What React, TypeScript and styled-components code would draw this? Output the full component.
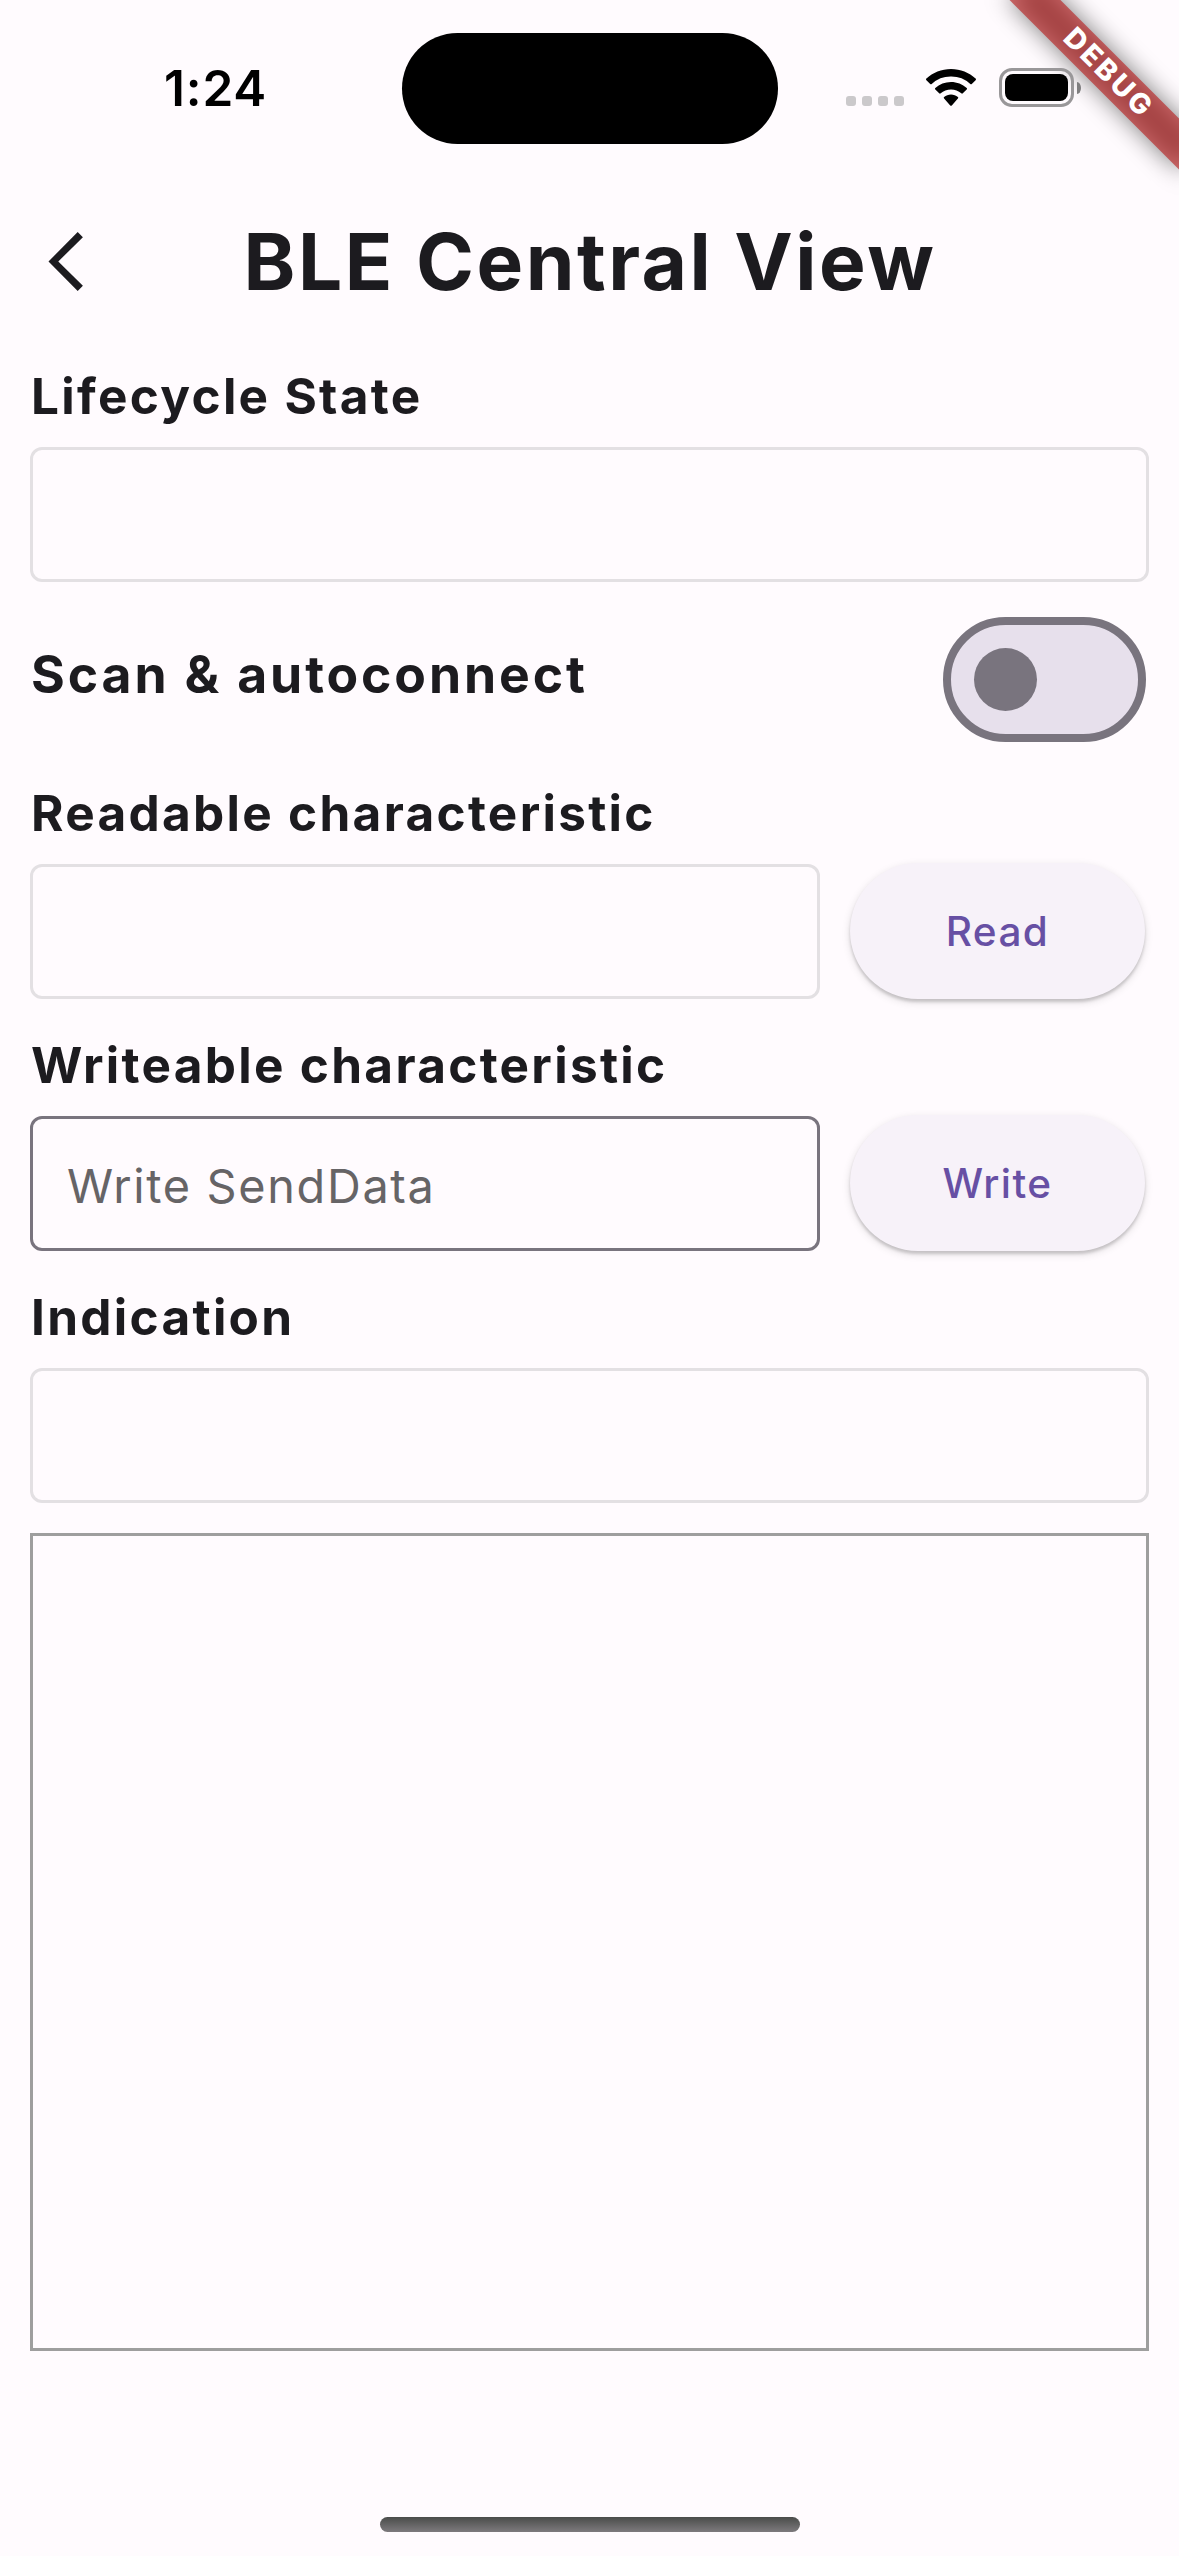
import React from "react";
import styled, { createGlobalStyle } from "styled-components";

const color = {
  surface: "#fffbfe",
  onSurface: "#1c1b1f",
  outline: "#79747e",
  track: "#e7e0ec",
  primary: "#6750a4",
  disabled: "#e3e0e3",
  hint: "#666466",
  grey: "#9e9e9e",
};

const GlobalStyle = createGlobalStyle`
  *, *::before, *::after { box-sizing: border-box; }
  html, body { margin: 0; padding: 0; background: ${color.surface}; }
`;

const Screen = styled.div`
  position: relative;
  display: flex;
  flex-direction: column;
  width: 1179px;
  height: 2556px;
  overflow: hidden;
  background: ${color.surface};
  color: ${color.onSurface};
  font-family: Inter, "Liberation Sans", sans-serif;
`;

const StatusBar = styled.div`
  position: relative;
  z-index: 2;
  flex: none;
  display: grid;
  grid-template-columns: 1fr 376px 1fr;
  height: 177px;
`;

const Clock = styled.div`
  padding: 58px 0 0 164px;
  color: #000;
  font-size: 49.5px;
  font-weight: 600;
  line-height: 60px;
  letter-spacing: 0.84px;
`;

const Island = styled.div`
  height: 111px;
  margin-top: 33px;
  border-radius: 56px;
  background: #000;
`;

const StatusIcons = styled.div`
  display: flex;
  align-items: flex-start;
  padding: 68px 0 0 68px;
`;

const CellDots = styled.div`
  display: flex;
  gap: 6px;
  margin-top: 28px;
`;

const CellDot = styled.span`
  width: 10px;
  height: 10px;
  border-radius: 3px;
  background: #cbc9cb;
`;

const WifiGlyph = styled.svg`
  width: 50px;
  height: 38px;
  margin: 1px 23px 0 22px;
`;

const Battery = styled.div`
  display: flex;
  align-items: center;
  gap: 3px;
`;

const BatteryShell = styled.div`
  width: 75px;
  height: 39px;
  padding: 3px;
  border: 3px solid #999799;
  border-radius: 13px;
`;

const BatteryLevel = styled.div`
  height: 100%;
  border-radius: 8px;
  background: #000;
`;

const BatteryTip = styled.div`
  width: 4px;
  height: 12px;
  border-radius: 0 4px 4px 0 / 0 6px 6px 0;
  background: #7f7e7f;
`;

const BannerAnchor = styled.div`
  position: absolute;
  z-index: 1;
  top: 72px;
  left: 1107px;
  width: 0;
  height: 0;
  transform: rotate(45deg);
`;

const BannerShadow = styled.div`
  position: absolute;
  top: -18px;
  left: -120px;
  width: 240px;
  height: 36px;
  background: rgba(0, 0, 0, 0.5);
  filter: blur(12px);
`;

const BannerStrip = styled.div`
  position: absolute;
  top: -18px;
  left: -120px;
  display: flex;
  align-items: center;
  justify-content: center;
  width: 240px;
  height: 36px;
  padding: 0 0 3px 4px;
  background: rgba(183, 28, 28, 0.627);
  color: #fff;
  font-size: 28.5px;
  font-weight: 850;
  line-height: 33px;
  letter-spacing: 3px;
`;

const AppBar = styled.header`
  flex: none;
  display: grid;
  grid-template-columns: 168px 1fr 168px;
  align-items: center;
  height: 168px;
`;

const BackButton = styled.button`
  display: flex;
  align-items: center;
  height: 168px;
  padding: 0 0 0 48px;
  border: 0;
  background: none;
`;

const Title = styled.h1`
  margin: 2px 0 0 1px;
  font-size: 78.4px;
  font-weight: 680;
  line-height: 96px;
  letter-spacing: 2.5px;
  text-align: center;
  white-space: nowrap;
`;

const Body = styled.main`
  flex: 1;
  display: flex;
  flex-direction: column;
  padding: 21px 30px 0;
`;

const Section = styled.section<{ $after: number }>`
  display: flex;
  flex-direction: column;
  gap: 21px;
  margin-bottom: ${(p) => p.$after}px;
`;

const Label = styled.div`
  padding-left: 1px;
  font-size: 49.5px;
  font-weight: 680;
  line-height: 60px;
  letter-spacing: 2.3px;
  white-space: nowrap;
`;

const SwitchLabel = styled(Label)`
  padding-bottom: 12px;
  font-size: 51.7px;
  letter-spacing: 2.87px;
`;

const FieldRow = styled.div`
  display: flex;
  align-items: flex-end;
  gap: 30px;
  height: 135px;
`;

const Field = styled.input<{ $enabled?: boolean }>`
  flex: 1;
  min-width: 0;
  height: 135px;
  padding: 4px 34px 0;
  border: 3px solid ${(p) => (p.$enabled ? color.outline : color.disabled)};
  border-radius: 12px;
  outline: none;
  background: transparent;
  color: ${color.onSurface};
  font: 420 46.8px Inter, "Liberation Sans", sans-serif;
  letter-spacing: 1.68px;

  &::placeholder {
    color: ${color.hint};
    opacity: 1;
  }
`;

const PillButton = styled.button`
  flex: none;
  width: 295px;
  height: 136px;
  margin-right: 4px;
  padding: 1px 0 0;
  border: 0;
  border-radius: 68px;
  background: #f7f2f9;
  box-shadow: 0 3px 3px rgba(0, 0, 0, 0.15), 0 3px 8px rgba(0, 0, 0, 0.13);
  color: ${color.primary};
  font: 500 40.5px Inter, "Liberation Sans", sans-serif;
  letter-spacing: 1.45px;
`;

const SwitchRow = styled.div`
  display: flex;
  align-items: center;
  justify-content: space-between;
  height: 201px;
  padding: 0 3px 6px 0;
`;

const SwitchTrack = styled.div`
  display: flex;
  align-items: center;
  width: 203px;
  height: 125px;
  padding-left: 23px;
  border: 8px solid ${color.outline};
  border-radius: 63px;
  background: ${color.track};
`;

const SwitchThumb = styled.div`
  width: 63px;
  height: 63px;
  border-radius: 50%;
  background: ${color.outline};
`;

const LogPanel = styled.div`
  height: 818px;
  border: 3px solid ${color.grey};
`;

const HomeArea = styled.footer`
  flex: none;
  display: flex;
  justify-content: center;
  height: 39px;
`;

const HomeIndicator = styled.div`
  width: 420px;
  height: 15px;
  margin-left: 1px;
  border-radius: 8px;
  background: linear-gradient(#4a4c4a, #7d7a7d);
`;

function WifiIcon() {
  return (
    <WifiGlyph viewBox="0 0 50 38">
      <path d="M25 0C34.5 0 43.2 3.6 49.6 9.6a1.1 1.1 0 0 1 0 1.6l-3.8 3.8a1.1 1.1 0 0 1-1.5 0A28 28 0 0 0 25 7.6 28 28 0 0 0 5.700 15a1.100 1.100 0 0 1-1.500 0L.4 11.200a1.100 1.100 0 0 1 0-1.600C6.800 3.600 15.500 0 25 0Z" />
      <path d="M25 12.900c6 0 11.500 2.300 15.700 6a1.100 1.100 0 0 1 0 1.600l-3.900 3.800a1.100 1.100 0 0 1-1.500 0A15.600 15.600 0 0 0 25 20.500c-4 0-7.500 1.400-10.300 3.800a1.100 1.100 0 0 1-1.500 0l-3.900-3.800a1.100 1.100 0 0 1 0-1.600c4.200-3.700 9.700-6 15.700-6Z" />
      <path d="M25 25.500c2.600 0 5 .9 6.900 2.500a1.100 1.100 0 0 1 0 1.600l-6.100 6.800a1.100 1.100 0 0 1-1.600 0l-6.100-6.800a1.100 1.100 0 0 1 0-1.600c1.900-1.600 4.300-2.500 6.900-2.500Z" />
    </WifiGlyph>
  );
}

function BackIcon() {
  return (
    <svg width="35" height="59" viewBox="0 0 35 59">
      <path d="M29.700 0 34.900 5.200 10.300 29.500 34.900 53.800 29.700 59 .5 29.500Z" fill={color.onSurface} />
    </svg>
  );
}

export default function App() {
  return (
    <Screen>
      <GlobalStyle />
      <StatusBar>
        <Clock>1:24</Clock>
        <Island />
        <StatusIcons>
          <CellDots>
            {[0, 1, 2, 3].map((dot) => (
              <CellDot key={dot} />
            ))}
          </CellDots>
          <WifiIcon />
          <Battery>
            <BatteryShell>
              <BatteryLevel />
            </BatteryShell>
            <BatteryTip />
          </Battery>
        </StatusIcons>
      </StatusBar>

      <BannerAnchor>
        <BannerShadow />
        <BannerStrip>DEBUG</BannerStrip>
      </BannerAnchor>

      <AppBar>
        <BackButton aria-label="Back">
          <BackIcon />
        </BackButton>
        <Title>BLE Central View</Title>
      </AppBar>

      <Body>
        <Section $after={0}>
          <Label>Lifecycle State</Label>
          <FieldRow>
            <Field readOnly />
          </FieldRow>
        </Section>

        <SwitchRow>
          <SwitchLabel>Scan &amp; autoconnect</SwitchLabel>
          <SwitchTrack role="switch" aria-checked={false}>
            <SwitchThumb />
          </SwitchTrack>
        </SwitchRow>

        <Section $after={36}>
          <Label>Readable characteristic</Label>
          <FieldRow>
            <Field readOnly />
            <PillButton>Read</PillButton>
          </FieldRow>
        </Section>

        <Section $after={36}>
          <Label>Writeable characteristic</Label>
          <FieldRow>
            <Field $enabled placeholder="Write SendData" />
            <PillButton>Write</PillButton>
          </FieldRow>
        </Section>

        <Section $after={30}>
          <Label>Indication</Label>
          <FieldRow>
            <Field readOnly />
          </FieldRow>
        </Section>

        <LogPanel />
      </Body>

      <HomeArea>
        <HomeIndicator />
      </HomeArea>
    </Screen>
  );
}
